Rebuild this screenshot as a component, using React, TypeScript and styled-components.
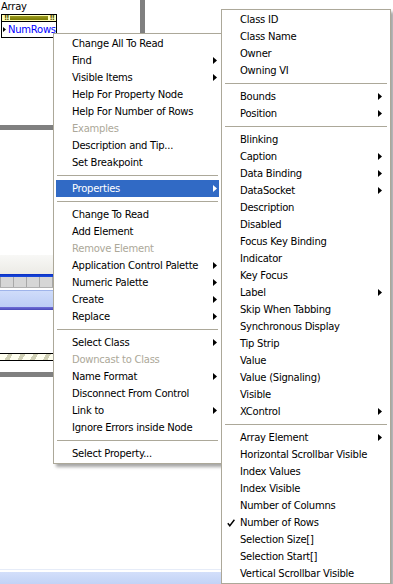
import React from "react";
import styled, { createGlobalStyle } from "styled-components";

type Entry =
  | { label: string; sub?: boolean; off?: boolean; hot?: boolean; check?: boolean }
  | "sep";

const nodeMenu: Entry[] = [
  { label: "Change All To Read" },
  { label: "Find", sub: true },
  { label: "Visible Items", sub: true },
  { label: "Help For Property Node" },
  { label: "Help For Number of Rows" },
  { label: "Examples", off: true },
  { label: "Description and Tip..." },
  { label: "Set Breakpoint" },
  "sep",
  { label: "Properties", sub: true, hot: true },
  "sep",
  { label: "Change To Read" },
  { label: "Add Element" },
  { label: "Remove Element", off: true },
  { label: "Application Control Palette", sub: true },
  { label: "Numeric Palette", sub: true },
  { label: "Create", sub: true },
  { label: "Replace", sub: true },
  "sep",
  { label: "Select Class", sub: true },
  { label: "Downcast to Class", off: true },
  { label: "Name Format", sub: true },
  { label: "Disconnect From Control" },
  { label: "Link to", sub: true },
  { label: "Ignore Errors inside Node" },
  "sep",
  { label: "Select Property..." },
];

const propMenu: Entry[] = [
  { label: "Class ID" },
  { label: "Class Name" },
  { label: "Owner" },
  { label: "Owning VI" },
  "sep",
  { label: "Bounds", sub: true },
  { label: "Position", sub: true },
  "sep",
  { label: "Blinking" },
  { label: "Caption", sub: true },
  { label: "Data Binding", sub: true },
  { label: "DataSocket", sub: true },
  { label: "Description" },
  { label: "Disabled" },
  { label: "Focus Key Binding" },
  { label: "Indicator" },
  { label: "Key Focus" },
  { label: "Label", sub: true },
  { label: "Skip When Tabbing" },
  { label: "Synchronous Display" },
  { label: "Tip Strip" },
  { label: "Value" },
  { label: "Value (Signaling)" },
  { label: "Visible" },
  { label: "XControl", sub: true },
  "sep",
  { label: "Array Element", sub: true },
  { label: "Horizontal Scrollbar Visible" },
  { label: "Index Values" },
  { label: "Index Visible" },
  { label: "Number of Columns" },
  { label: "Number of Rows", check: true },
  { label: "Selection Size[]" },
  { label: "Selection Start[]" },
  { label: "Vertical Scrollbar Visible" },
];

const SubArrow = ({ color }: { color: string }) => (
  <svg width="4" height="7" viewBox="0 0 4 7">
    <polygon points="0,0 4,3.5 0,7" fill={color} />
  </svg>
);

const CheckMark = () => (
  <svg width="8" height="8" viewBox="0 0 8 8">
    <path d="M0.8 4.2 L2.8 6.8 L7.4 0.8" fill="none" stroke="#000" strokeWidth="1.4" />
  </svg>
);

const PopupMenu = ({
  items,
  left,
  top,
  width,
  tail,
}: {
  items: Entry[];
  left: number;
  top: number;
  width: number;
  tail: number;
}) => (
  <Menu $left={left} $top={top} $width={width}>
    {items.map((it, i) =>
      it === "sep" ? (
        <Divider key={i} />
      ) : (
        <Row key={i} $hot={!!it.hot} $off={!!it.off} $tail={tail}>
          <Gutter>{it.check && <CheckMark />}</Gutter>
          <Label>{it.label}</Label>
          {it.sub && <SubArrow color={it.hot ? "#fff" : "#000"} />}
        </Row>
      )
    )}
  </Menu>
);

export default function App() {
  return (
    <>
      <GlobalStyle />
      <Page>
        <Caption>Array</Caption>
        <NodeBox>
          <NodeHead>
            <Bang>!!</Bang>
            <ClassBar />
            <Bang>!!</Bang>
          </NodeHead>
          <NodeRow>
            <Pointer width="3" height="5" viewBox="0 0 3 5">
              <polygon points="0,0 3,2.5 0,5" fill="#000" />
            </Pointer>
            <PropName>NumRows</PropName>
          </NodeRow>
        </NodeBox>

        <Wire $x={140} $y={0} $w={5} $h={34} />
        <Wire $x={0} $y={125} $w={60} $h={5} />

        <Strips>
          <PaleBand />
          <BlueLine />
          <GridRow />
          <Gap />
          <SkyBand />
          <VioletLine />
        </Strips>

        <HatchBar />
        <Wire $x={0} $y={372} $w={60} $h={5} />
        <FootBand />

        <PopupMenu items={nodeMenu} left={53} top={33} width={169} tail={2} />
        <PopupMenu items={propMenu} left={221} top={9} width={170} tail={6} />
      </Page>
    </>
  );
}

const GlobalStyle = createGlobalStyle`
  html, body {
    margin: 0;
    padding: 0;
    background: #ffffff;
  }
  body {
    font-family: "DejaVu Sans", Verdana, sans-serif;
    font-size: 10px;
    letter-spacing: -0.25px;
    color: #000;
  }
`;

const Page = styled.div`
  position: relative;
  width: 393px;
  height: 584px;
  overflow: hidden;
  background: #ffffff;
`;

const Caption = styled.div`
  position: absolute;
  left: 1px;
  top: 0;
  line-height: 14px;
`;

const NodeBox = styled.div`
  position: absolute;
  left: 1px;
  top: 14px;
  width: 56px;
  box-sizing: border-box;
  border: 1px solid #000;
  display: flex;
  flex-direction: column;
`;

const NodeHead = styled.div`
  height: 6px;
  display: flex;
  align-items: center;
  gap: 2px;
  padding: 0 2px;
  background: #ffffb8;
  border-bottom: 1px solid #000;
`;

const Bang = styled.span`
  font-size: 7px;
  font-weight: bold;
  line-height: 6px;
  letter-spacing: -1px;
  color: #4a4a00;
`;

const ClassBar = styled.div`
  flex: 1;
  height: 4px;
  background: linear-gradient(#9a9a20, #7a7a00);
`;

const NodeRow = styled.div`
  height: 15px;
  display: flex;
  align-items: center;
  gap: 2px;
  padding-left: 1px;
  overflow: hidden;
  background: #fff;
`;

const Pointer = styled.svg`
  flex: none;
`;

const PropName = styled.span`
  color: #0000ff;
  line-height: 15px;
  white-space: nowrap;
`;

const Wire = styled.div<{ $x: number; $y: number; $w: number; $h: number }>`
  position: absolute;
  left: ${(p) => p.$x}px;
  top: ${(p) => p.$y}px;
  width: ${(p) => p.$w}px;
  height: ${(p) => p.$h}px;
  background: #808080;
`;

const Strips = styled.div`
  position: absolute;
  left: 0;
  top: 255px;
  width: 222px;
  display: flex;
  flex-direction: column;
`;

const PaleBand = styled.div`
  height: 19px;
  background: linear-gradient(#f8f8f6, #ecebe6);
`;

const BlueLine = styled.div`
  height: 3px;
  background: linear-gradient(#0a2fc0, #1a4ce0);
`;

const GridRow = styled.div`
  height: 10px;
  background-color: #d6d6d6;
  background-image: repeating-linear-gradient(90deg, #a8a8a8 0 1px, transparent 1px 13px);
  border-bottom: 1px solid #b0b0b0;
`;

const Gap = styled.div`
  height: 2px;
  background: #fff;
`;

const SkyBand = styled.div`
  height: 17px;
  box-sizing: border-box;
  border-top: 1px solid #9fb4ea;
  background: linear-gradient(#cfdcfa, #bccdf5);
`;

const VioletLine = styled.div`
  height: 3px;
  background: linear-gradient(#7070d8, #4848b8);
`;

const HatchBar = styled.div`
  position: absolute;
  left: 0;
  top: 353px;
  width: 222px;
  height: 8px;
  box-sizing: border-box;
  border-top: 1px solid #000;
  border-bottom: 1px solid #000;
  background: repeating-linear-gradient(
    120deg,
    #fffff0 0 7px,
    #cfcfb4 7px 11px
  );
`;

const FootBand = styled.div`
  position: absolute;
  left: 0;
  top: 569px;
  width: 222px;
  height: 15px;
  box-sizing: border-box;
  border-top: 1px solid #e6ecf8;
  background: linear-gradient(#fff 0 2px, #d3dffa 2px, #c2d2f6);
`;

const Menu = styled.div<{ $left: number; $top: number; $width: number }>`
  position: absolute;
  left: ${(p) => p.$left}px;
  top: ${(p) => p.$top}px;
  width: ${(p) => p.$width}px;
  box-sizing: border-box;
  padding: 1px 2px;
  background: #fff;
  border: 1px solid #aca899;
  box-shadow: 3px 3px 3px rgba(0, 0, 0, 0.35);
  display: flex;
  flex-direction: column;
`;

const Row = styled.div<{ $hot: boolean; $off: boolean; $tail: number }>`
  height: 17px;
  display: flex;
  align-items: center;
  padding-right: ${(p) => p.$tail}px;
  background: ${(p) => (p.$hot ? "#316ac5" : "transparent")};
  color: ${(p) => (p.$hot ? "#fff" : p.$off ? "#aca899" : "#000")};
`;

const Gutter = styled.span`
  width: 16px;
  flex: none;
  display: flex;
  align-items: center;
  padding-left: 3px;
  box-sizing: border-box;
`;

const Label = styled.span`
  flex: 1;
  padding-top: 1px;
  line-height: 16px;
  white-space: nowrap;
`;

const Divider = styled.div`
  height: 9px;
  flex: none;
  margin: 0 1px;
  background: linear-gradient(transparent 4px, #aca899 4px 5px, transparent 5px);
`;
